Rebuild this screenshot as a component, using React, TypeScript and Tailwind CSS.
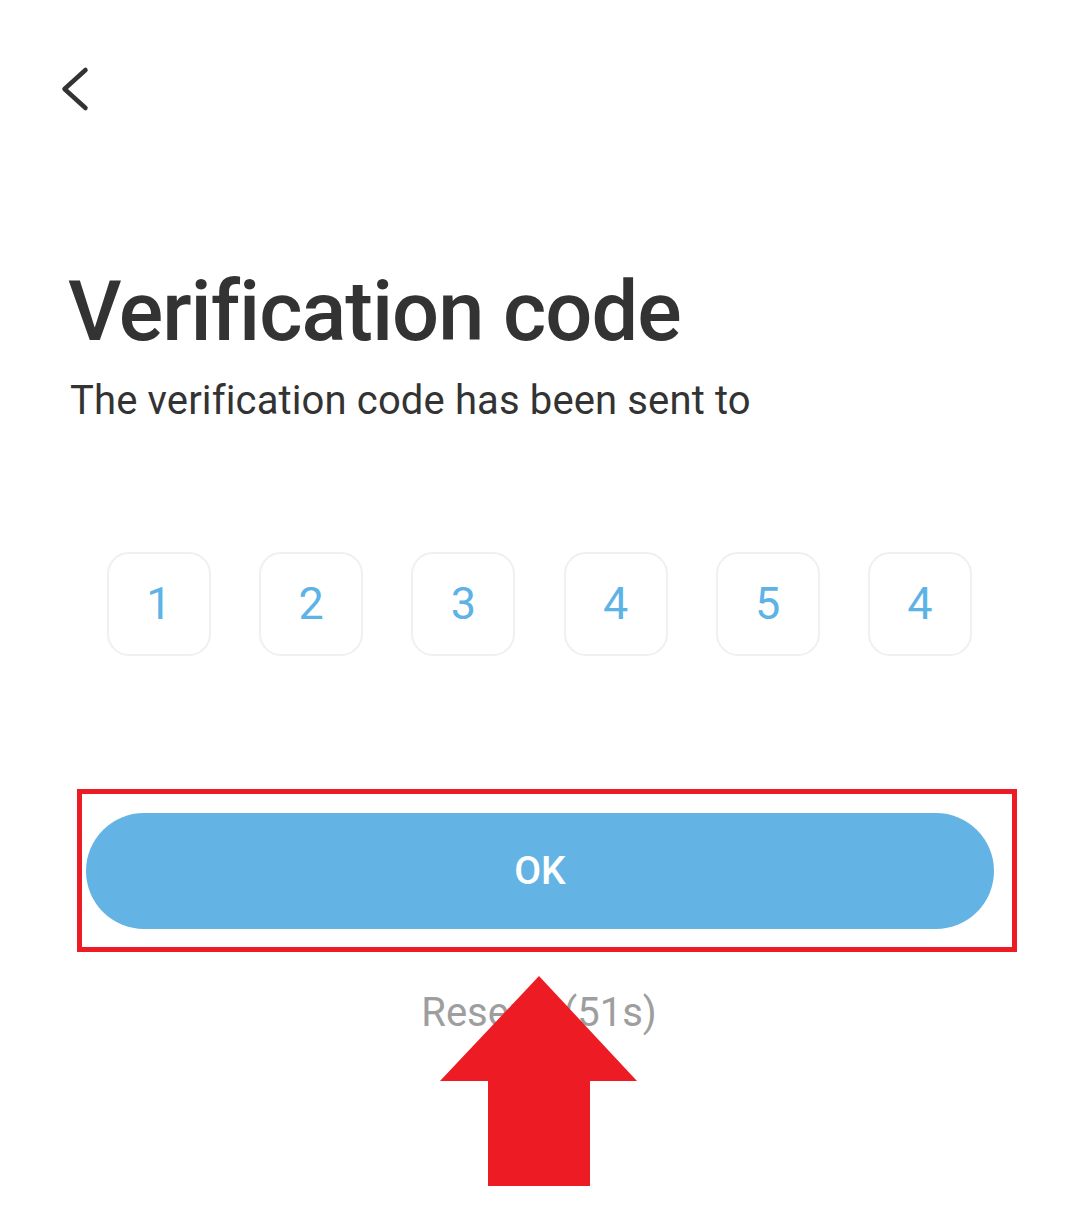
import React from 'react';

const digits = ['1', '2', '3', '4', '5', '4'];

export default function App() {
  return (
    <div
      className="relative w-[1080px] h-[1227px] overflow-hidden bg-white"
      style={{ fontFamily: 'Roboto, "Noto Sans", sans-serif' }}
    >
      {/* back */}
      <div className="pt-[65px] pl-[60px]">
        <svg width="30" height="48" viewBox="0 0 30 48" fill="none">
          <path
            d="M25.5 5 L4.5 24 L25.5 43"
            stroke="#333333"
            strokeWidth="4.5"
            strokeLinecap="round"
            strokeLinejoin="round"
          />
        </svg>
      </div>

      <h1 className="mt-[149px] pl-[68px] text-[83px] leading-[100px] font-medium tracking-[-1px] text-[#333333]">
        Verification code
      </h1>
      <p className="mt-[15px] pl-[70px] text-[40px] leading-[48px] tracking-[0.13px] text-[#333333]">
        The verification code has been sent to
      </p>

      {/* code boxes */}
      <div className="mt-[127px] ml-[107px] flex gap-[48.2px]">
        {digits.map((d, i) => (
          <div
            key={i}
            className="flex h-[104px] w-[104px] items-center justify-center rounded-[22px] border-2 border-[#f0f0f0] text-[45px] text-[#5eb3e6]"
          >
            {d}
          </div>
        ))}
      </div>

      {/* highlighted button */}
      <div className="ml-[77px] mt-[133px] h-[163px] w-[940px] border-[5px] border-[#ed1c24]">
        <button className="ml-[4px] mt-[19px] flex h-[116px] w-[908px] items-center justify-center rounded-full bg-[#63b4e4] text-[39px] font-medium text-white">
          OK
        </button>
      </div>

      <p className="mt-[37px] pr-[2px] text-center text-[40px] leading-[48px] text-[#9e9e9e]">
        Resend (51s)
      </p>

      {/* annotation arrow */}
      <svg
        className="absolute left-[440px] top-[976px]"
        width="198"
        height="211"
        viewBox="0 0 198 211"
      >
        <polygon
          points="99,0 197,105 150,105 150,210 48,210 48,105 0,105"
          fill="#ed1c24"
        />
      </svg>
    </div>
  );
}
